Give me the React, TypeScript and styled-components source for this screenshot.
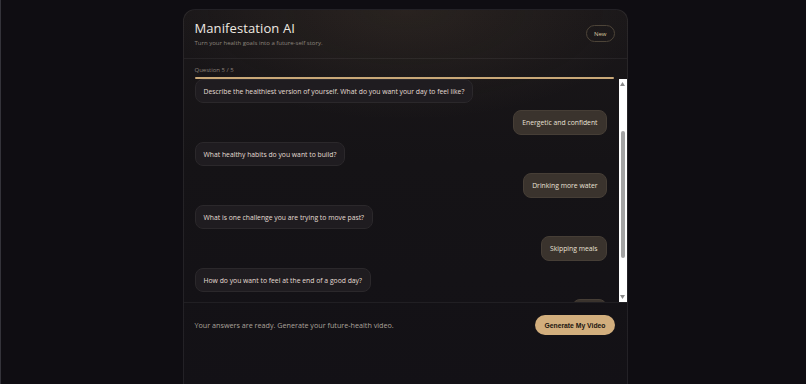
import React, { useLayoutEffect, useRef } from "react";
import styled, { createGlobalStyle } from "styled-components";

const Global = createGlobalStyle`
  html, body { margin: 0; padding: 0; height: 100%; overflow: hidden; background: #0f0d12; }
  body { font-family: "Open Sans", "Noto Sans", sans-serif; color: #e6dfd6; }
  * { box-sizing: border-box; }
`;

const Page = styled.div`
  min-height: 100vh;
  border-left: 1px solid #34333a;
  display: flex;
  justify-content: center;
  align-items: flex-start;
  padding: 9px 0 0 3px;
`;

const Card = styled.div`
  width: 445px;
  border: 1px solid rgba(255, 255, 255, 0.07);
  border-radius: 12px;
  background:
    radial-gradient(ellipse 240px 110px at 50% 0%, rgba(150, 120, 80, 0.12), transparent 100%),
    linear-gradient(180deg, #1a1719 0%, #151316 40%, #131116 100%);
  display: flex;
  flex-direction: column;
  overflow: hidden;
`;

const Header = styled.div`
  display: flex;
  justify-content: space-between;
  align-items: center;
  padding: 9px 12px 10px 11px;
  border-bottom: 1px solid rgba(255, 255, 255, 0.06);
`;

const TitleBlock = styled.div`
  display: flex;
  flex-direction: column;
  gap: 2px;
`;

const Title = styled.h1`
  margin: 0;
  font-size: 13px;
  line-height: 18px;
  font-weight: 400;
  color: #efe9e1;
  letter-spacing: 0.1px;
`;

const Subtitle = styled.p`
  margin: 0;
  font-size: 6px;
  line-height: 9px;
  color: #8d857d;
`;

const Badge = styled.span`
  display: inline-flex;
  align-items: center;
  justify-content: center;
  height: 17px;
  padding: 0 7px;
  border-radius: 999px;
  border: 1px solid #4d4438;
  font-size: 6px;
  color: #d9c39f;
`;

const Body = styled.div`
  display: flex;
  flex-direction: column;
  padding: 7px 0 0 11px;
`;

const Step = styled.div`
  font-size: 6px;
  line-height: 8px;
  color: #8a8179;
  margin-bottom: 3px;
`;

const Progress = styled.div`
  height: 2px;
  margin-right: 13px;
  background: #2a2623;
  border-radius: 1px;
  overflow: hidden;
`;

const ProgressFill = styled.div`
  height: 100%;
  background: #c9a878;
`;

const ThreadRow = styled.div`
  display: flex;
  height: 223px;
`;

const Thread = styled.div`
  flex: 1;
  overflow-y: scroll;
  scrollbar-width: none;
  display: flex;
  flex-direction: column;
  gap: 7px;
  padding: 14px 12px 38px 0;
  &::-webkit-scrollbar { display: none; }
`;

const Rail = styled.div`
  width: 8px;
  flex: none;
  background: #ffffff;
  display: flex;
  flex-direction: column;
  align-items: center;
`;

const RailArrow = styled.div`
  height: 10px;
  display: flex;
  align-items: center;
  justify-content: center;
`;

const RailTrack = styled.div`
  flex: 1;
  display: flex;
  flex-direction: column;
  align-items: center;
`;

const Thumb = styled.div`
  width: 4px;
  border-radius: 2px;
  background: #a3a3a3;
`;

const Bubble = styled.div<{ $mine?: boolean }>`
  flex: none;
  align-self: ${(p) => (p.$mine ? "flex-end" : "flex-start")};
  max-width: 80%;
  padding: ${(p) => (p.$mine ? "6px 8px" : "5.5px 8px")};
  border-radius: 8px;
  font-size: 6.8px;
  line-height: 11px;
  color: ${(p) => (p.$mine ? "#e9e1d6" : "#e4ddd4")};
  background: ${(p) => (p.$mine ? "#3a332d" : "#1f1c20")};
  border: 1px solid ${(p) => (p.$mine ? "#463e36" : "#2b282b")};
`;

const Footer = styled.div`
  display: flex;
  justify-content: space-between;
  align-items: center;
  padding: 12px 12px 60px 11px;
  border-top: 1px solid rgba(255, 255, 255, 0.06);
`;

const FooterText = styled.p`
  margin: 0;
  font-size: 7.2px;
  color: #aaa29a;
`;

const Primary = styled.button`
  height: 20px;
  padding: 0 9px;
  border: none;
  border-radius: 999px;
  background: #d2ae7d;
  color: #1b150f;
  font-family: "Liberation Sans", Arial, sans-serif;
  font-weight: 700;
  font-size: 6.8px;
  cursor: pointer;
`;

const messages: { text: string; mine?: boolean }[] = [
  { text: "What is the main health goal you want to reach?" },
  { text: "Feeling stronger", mine: true },
  { text: "Describe the healthiest version of yourself. What do you want your day to feel like?" },
  { text: "Energetic and confident", mine: true },
  { text: "What healthy habits do you want to build?" },
  { text: "Drinking more water", mine: true },
  { text: "What is one challenge you are trying to move past?" },
  { text: "Skipping meals", mine: true },
  { text: "How do you want to feel at the end of a good day?" },
  { text: "Calm", mine: true },
];

const Arrow = ({ down }: { down?: boolean }) => (
  <svg width="5" height="4" viewBox="0 0 5 4">
    <path d={down ? "M0 0H5L2.5 4Z" : "M0 4H5L2.5 0Z"} fill="#8a8a8a" />
  </svg>
);

export default function App() {
  const ref = useRef<HTMLDivElement>(null);
  useLayoutEffect(() => {
    if (ref.current) ref.current.scrollTop = 77;
  }, []);
  return (
    <>
      <Global />
      <Page>
        <Card>
          <Header>
            <TitleBlock>
              <Title>Manifestation AI</Title>
              <Subtitle>Turn your health goals into a future-self story.</Subtitle>
            </TitleBlock>
            <Badge>New</Badge>
          </Header>
          <Body>
            <Step>Question 5 / 5</Step>
            <Progress>
              <ProgressFill style={{ width: "100%" }} />
            </Progress>
            <ThreadRow>
              <Thread ref={ref}>
                {messages.map((m, i) => (
                  <Bubble key={i} $mine={m.mine}>
                    {m.text}
                  </Bubble>
                ))}
              </Thread>
              <Rail>
                <RailArrow>
                  <Arrow />
                </RailArrow>
                <RailTrack>
                  <Thumb style={{ marginTop: 42, height: 127 }} />
                </RailTrack>
                <RailArrow>
                  <Arrow down />
                </RailArrow>
              </Rail>
            </ThreadRow>
          </Body>
          <Footer>
            <FooterText>Your answers are ready. Generate your future-health video.</FooterText>
            <Primary>Generate My Video</Primary>
          </Footer>
        </Card>
      </Page>
    </>
  );
}
